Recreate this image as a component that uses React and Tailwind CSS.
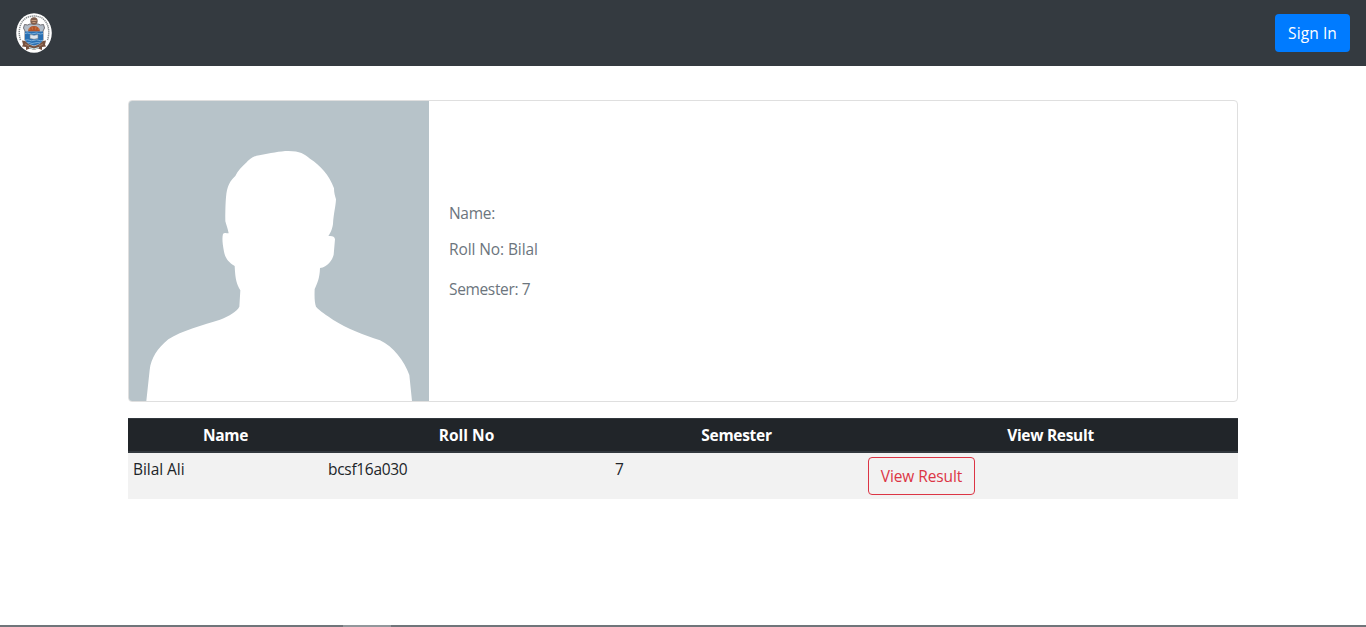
function Crest() {
  return (
    <svg className="block h-10 w-9" viewBox="0 0 36 40">
      <ellipse cx="18" cy="20" rx="17.8" ry="19.7" fill="#fff" />
      <path d="M4.500 27C1.500 18 4 8 11 4.500Q18 1.500 25 4.500C32 8 34.500 18 31.500 27" fill="none" stroke="#85898c" strokeWidth="1.500" strokeDasharray="1.3 .7" />
      <path d="M8.500 11.500l3 .5 2.500-1h8l2.500 1 3-.5 1 3.500-1.500 3v9q-2 5-9 7-7-2-9-7v-9L7.500 15z" fill="#b3bdc8" stroke="#737176" strokeWidth="1" />
      <circle cx="18" cy="8" r="3.700" fill="#80604f" />
      <path d="M15.500 7.500h5M16.500 9.500h3" stroke="#d1a180" strokeWidth=".9" />
      <path d="M12 18.500q.5-5.500 6-5.500t6 5.500z" fill="#b2552a" />
      <path d="M14 17l-1-2M16.500 16.500l-.5-2.500M19.500 16.500l.5-2.500M22 17l1-2" stroke="#dd894f" strokeWidth=".6" />
      <path d="M9 18.500h18v8.500q-2 4-9 5.500-7-1.500-9-5.500z" fill="#286fb3" />
      <path d="M9 20.500q3-1 4.500 0t4.500 0 4.500 0 4.500 0M9 27.300q3-1 4.500 0t4.500 0 4.500 0 4.500 0M10.500 30q3-1 4 0t4 0 6 0" fill="none" stroke="#8fbfe3" strokeWidth=".8" />
      <path d="M14 21.500l4 .8 4-.8v4l-4 .8-4-.8z" fill="#dfe6ed" stroke="#777f8a" strokeWidth=".6" />
      <path d="M6 27.500l3 .5q3 4 9 5.500 6-1.500 9-5.500l3-.5-1 4 1 2-4 .5v3l-4-1.500-4 1.500-4-1.500-4 1.500v-3l-4-.5 1-2z" fill="#77523f" />
      <path d="M13 34.500l5 1.500 5-1.500" fill="none" stroke="#c5e4ea" strokeWidth="1.200" />
      <path d="M9 31l4 2M27 31l-4 2" stroke="#b28a72" strokeWidth=".8" />
    </svg>
  );
}

function Avatar() {
  return (
    <svg className="block size-[300px] shrink-0 rounded-l-[3px] bg-[#b7c3c9]" viewBox="27 33 900 900">
      <path
        fill="#fff"
        d="M79 933L89 840C93 805 112 775 145 748C185 721 250 705 300 689C325 680 352 663 358 650L361 601C350 580 346 572 344 528C325 516 316 505 312 485C307 460 306 442 309 432C313 427 319 429 326 430C323 415 319 405 316 394C316 350 317 310 323 293C331 272 338 266 346 258C353 242 366 230 380 217C395 201 403 199 418 196C450 190 480 183 505 183C540 183 553 192 570 206C600 225 628 255 642 295C642 310 645 317 648 328C647 350 641 370 639 402C636 421 631 429 625 438C636 437 644 438 645 448L641 494C637 510 623 531 600 534C599 565 592 580 584 597C583 625 584 638 588 650C600 664 620 675 640 690C680 715 730 735 780 751C820 770 853 813 868 855L876 933Z"
      />
    </svg>
  );
}

const columns = ["Name", "Roll No", "Semester", "View Result"];
const rows = [{ name: "Bilal Ali", roll: "bcsf16a030", semester: "7" }];

export default function App() {
  return (
    <div className="flex h-[627px] flex-col overflow-hidden bg-white font-['Open_Sans','Noto_Sans',sans-serif] text-[15.5px] leading-6 tracking-[-0.3px] text-[#212529]">
      <nav className="flex h-[66px] shrink-0 items-center justify-between bg-[#343a40] px-4">
        <a href="#" aria-label="Home"><Crest /></a>
        <button className="h-[38px] w-[75px] rounded bg-[#007bff] tracking-[0.1px] text-white">Sign In</button>
      </nav>
      <main className="mx-auto mt-[34px] w-[1110px] grow">
        <section className="flex h-[302px] items-center rounded border border-[#dfdfdf]">
          <Avatar />
          <div className="px-5 text-[#6c757d]">
            <p className="mb-3">Name:</p>
            <p className="mb-4 tracking-[-0.1px]">Roll No: Bilal</p>
            <p className="tracking-[-0.35px]">Semester: 7</p>
          </div>
        </section>
        <table className="mt-4 w-full table-fixed border-collapse">
          <colgroup>
            <col className="w-[195px]" />
            <col className="w-[287px]" />
            <col className="w-[253px]" />
            <col className="w-[375px]" />
          </colgroup>
          <thead>
            <tr className="h-[35px] bg-[#212529] text-white shadow-[inset_0_1px_0_#32383e,inset_0_-2px_0_#32383e]">
              {columns.map((c) => (
                <th key={c} className={`px-0 pt-0 pb-0.5 text-center font-bold ${c === "Roll No" ? "tracking-[0px]" : ""}`}>{c}</th>
              ))}
            </tr>
          </thead>
          <tbody>
            {rows.map((r) => (
              <tr key={r.roll} className="h-[46px] bg-[#f2f2f2] align-top">
                <td className="px-[5px] py-1 tracking-[-0.05px]">{r.name}</td>
                <td className="px-[5px] py-1">{r.roll}</td>
                <td className="px-[5px] py-1">{r.semester}</td>
                <td className="px-[5px] py-1">
                  <button className="block h-[38px] w-[107px] rounded border border-[#dc3545] tracking-[-0.1px] text-[#dc3545]">View Result</button>
                </td>
              </tr>
            ))}
          </tbody>
        </table>
      </main>
      <footer className="flex h-0.5 shrink-0 bg-[#70757a]">
        <div className="ml-[343px] w-12 bg-[#92979b]" />
      </footer>
    </div>
  );
}
